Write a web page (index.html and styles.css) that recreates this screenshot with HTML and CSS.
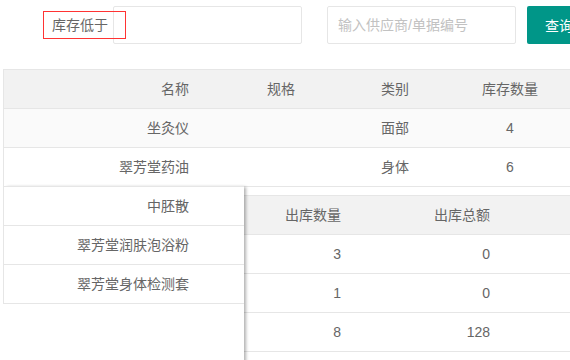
FILE: index.html
```html
<!doctype html>
<html>
  <head>
    <title>库存查询</title>
    <link rel="stylesheet" href="styles.css">
  </head>
  <body>
    <div class="toolbar">
      <label class="stock-label" for="stockMin">库存低于</label>
      <input type="text" id="stockMin" class="field" />
      <input
        type="text"
        id="keyword"
        class="field field-keyword"
        placeholder="输入供应商/单据编号"
      />
      <button class="search-btn">查询</button>
    </div>

    <div class="stock-table">
      <div class="row head">
        <div class="cell name">名称</div>
        <div class="cell">规格</div>
        <div class="cell">类别</div>
        <div class="cell">库存数量</div>
      </div>
      <div class="row striped">
        <div class="cell name">坐灸仪</div>
        <div class="cell"></div>
        <div class="cell">面部</div>
        <div class="cell">4</div>
      </div>
      <div class="row">
        <div class="cell name">翠芳堂药油</div>
        <div class="cell"></div>
        <div class="cell">身体</div>
        <div class="cell">6</div>
      </div>
    </div>

    <div class="out-wrap">
      <div class="out-table">
        <div class="row head">
          <div class="cell"></div>
          <div class="cell">出库数量</div>
          <div class="cell">出库总额</div>
          <div class="cell"></div>
        </div>
        <div class="row">
          <div class="cell"></div>
          <div class="cell">3</div>
          <div class="cell">0</div>
          <div class="cell"></div>
        </div>
        <div class="row">
          <div class="cell"></div>
          <div class="cell">1</div>
          <div class="cell">0</div>
          <div class="cell"></div>
        </div>
        <div class="row">
          <div class="cell"></div>
          <div class="cell">8</div>
          <div class="cell">128</div>
          <div class="cell"></div>
        </div>
      </div>

      <div class="fixed-left">
        <div class="fixed-rows">
          <div class="fixed-row">中胚散</div>
          <div class="fixed-row">翠芳堂润肤泡浴粉</div>
          <div class="fixed-row">翠芳堂身体检测套</div>
        </div>
      </div>
    </div>
  </body>
</html>
```

FILE: styles.css
```css
* {
  margin: 0;
  padding: 0;
  box-sizing: border-box;
  font-family: "Liberation Sans", "Noto Sans CJK SC", sans-serif;
}

body {
  width: 570px;
  height: 360px;
  overflow: hidden;
  background: #fff;
  color: #666;
  font-size: 14px;
}

.toolbar {
  display: flex;
  align-items: center;
  padding: 6px 0 0 43px;
  width: 700px;
}

.stock-label {
  position: relative;
  z-index: 1;
  width: 83px;
  height: 28px;
  line-height: 26px;
  padding-left: 8px;
  margin-right: -13px;
  border: 1px solid #f33;
  color: #666;
}

.field {
  width: 189px;
  height: 38px;
  padding: 0 10px;
  border: 1px solid #e6e6e6;
  border-radius: 2px;
  background: #fff;
  color: #666;
  font-size: 14px;
  outline: none;
}

.field::placeholder {
  color: #c2c2c2;
}

.field-keyword {
  margin-left: 25px;
}

.search-btn {
  margin-left: 11px;
  height: 38px;
  padding: 0 18px;
  border: none;
  border-radius: 2px;
  background: #009688;
  color: #fff;
  font-size: 14px;
  cursor: pointer;
}

.row {
  display: grid;
  border-bottom: 1px solid #e6e6e6;
}

.cell {
  height: 38px;
  line-height: 38px;
  padding: 0 15px;
  white-space: nowrap;
}

.head {
  background: #f2f2f2;
}

.striped {
  background: #fafafa;
}

/* stock table */
.stock-table {
  margin: 25px 0 0 3px;
  width: 620px;
  border-top: 1px solid #e6e6e6;
  border-left: 1px solid #e6e6e6;
}

.stock-table .row {
  grid-template-columns: 200px 154px 74px 156px;
}

.stock-table .cell {
  text-align: center;
  padding: 0;
}

.stock-table .cell.name {
  text-align: right;
  padding-right: 15px;
}

/* outbound table with fixed left column */
.out-wrap {
  position: relative;
  margin: 8px 0 0 3px;
}

.out-table {
  width: 620px;
  border-top: 1px solid #e6e6e6;
}

.out-table .row {
  grid-template-columns: 241px 112px 149px 1fr;
}

.out-table .cell {
  text-align: right;
}

.fixed-left {
  position: absolute;
  top: -9px;
  left: 0;
  width: 241px;
  height: 260px;
  background: #fff;
  box-shadow: 3px 0 3px -1px rgba(0, 0, 0, 0.3);
}

.fixed-rows {
  border-top: 1px solid #e6e6e6;
  border-left: 1px solid #e6e6e6;
}

.fixed-row {
  height: 39px;
  line-height: 38px;
  padding-right: 55px;
  text-align: right;
  border-bottom: 1px solid #e6e6e6;
}
```
